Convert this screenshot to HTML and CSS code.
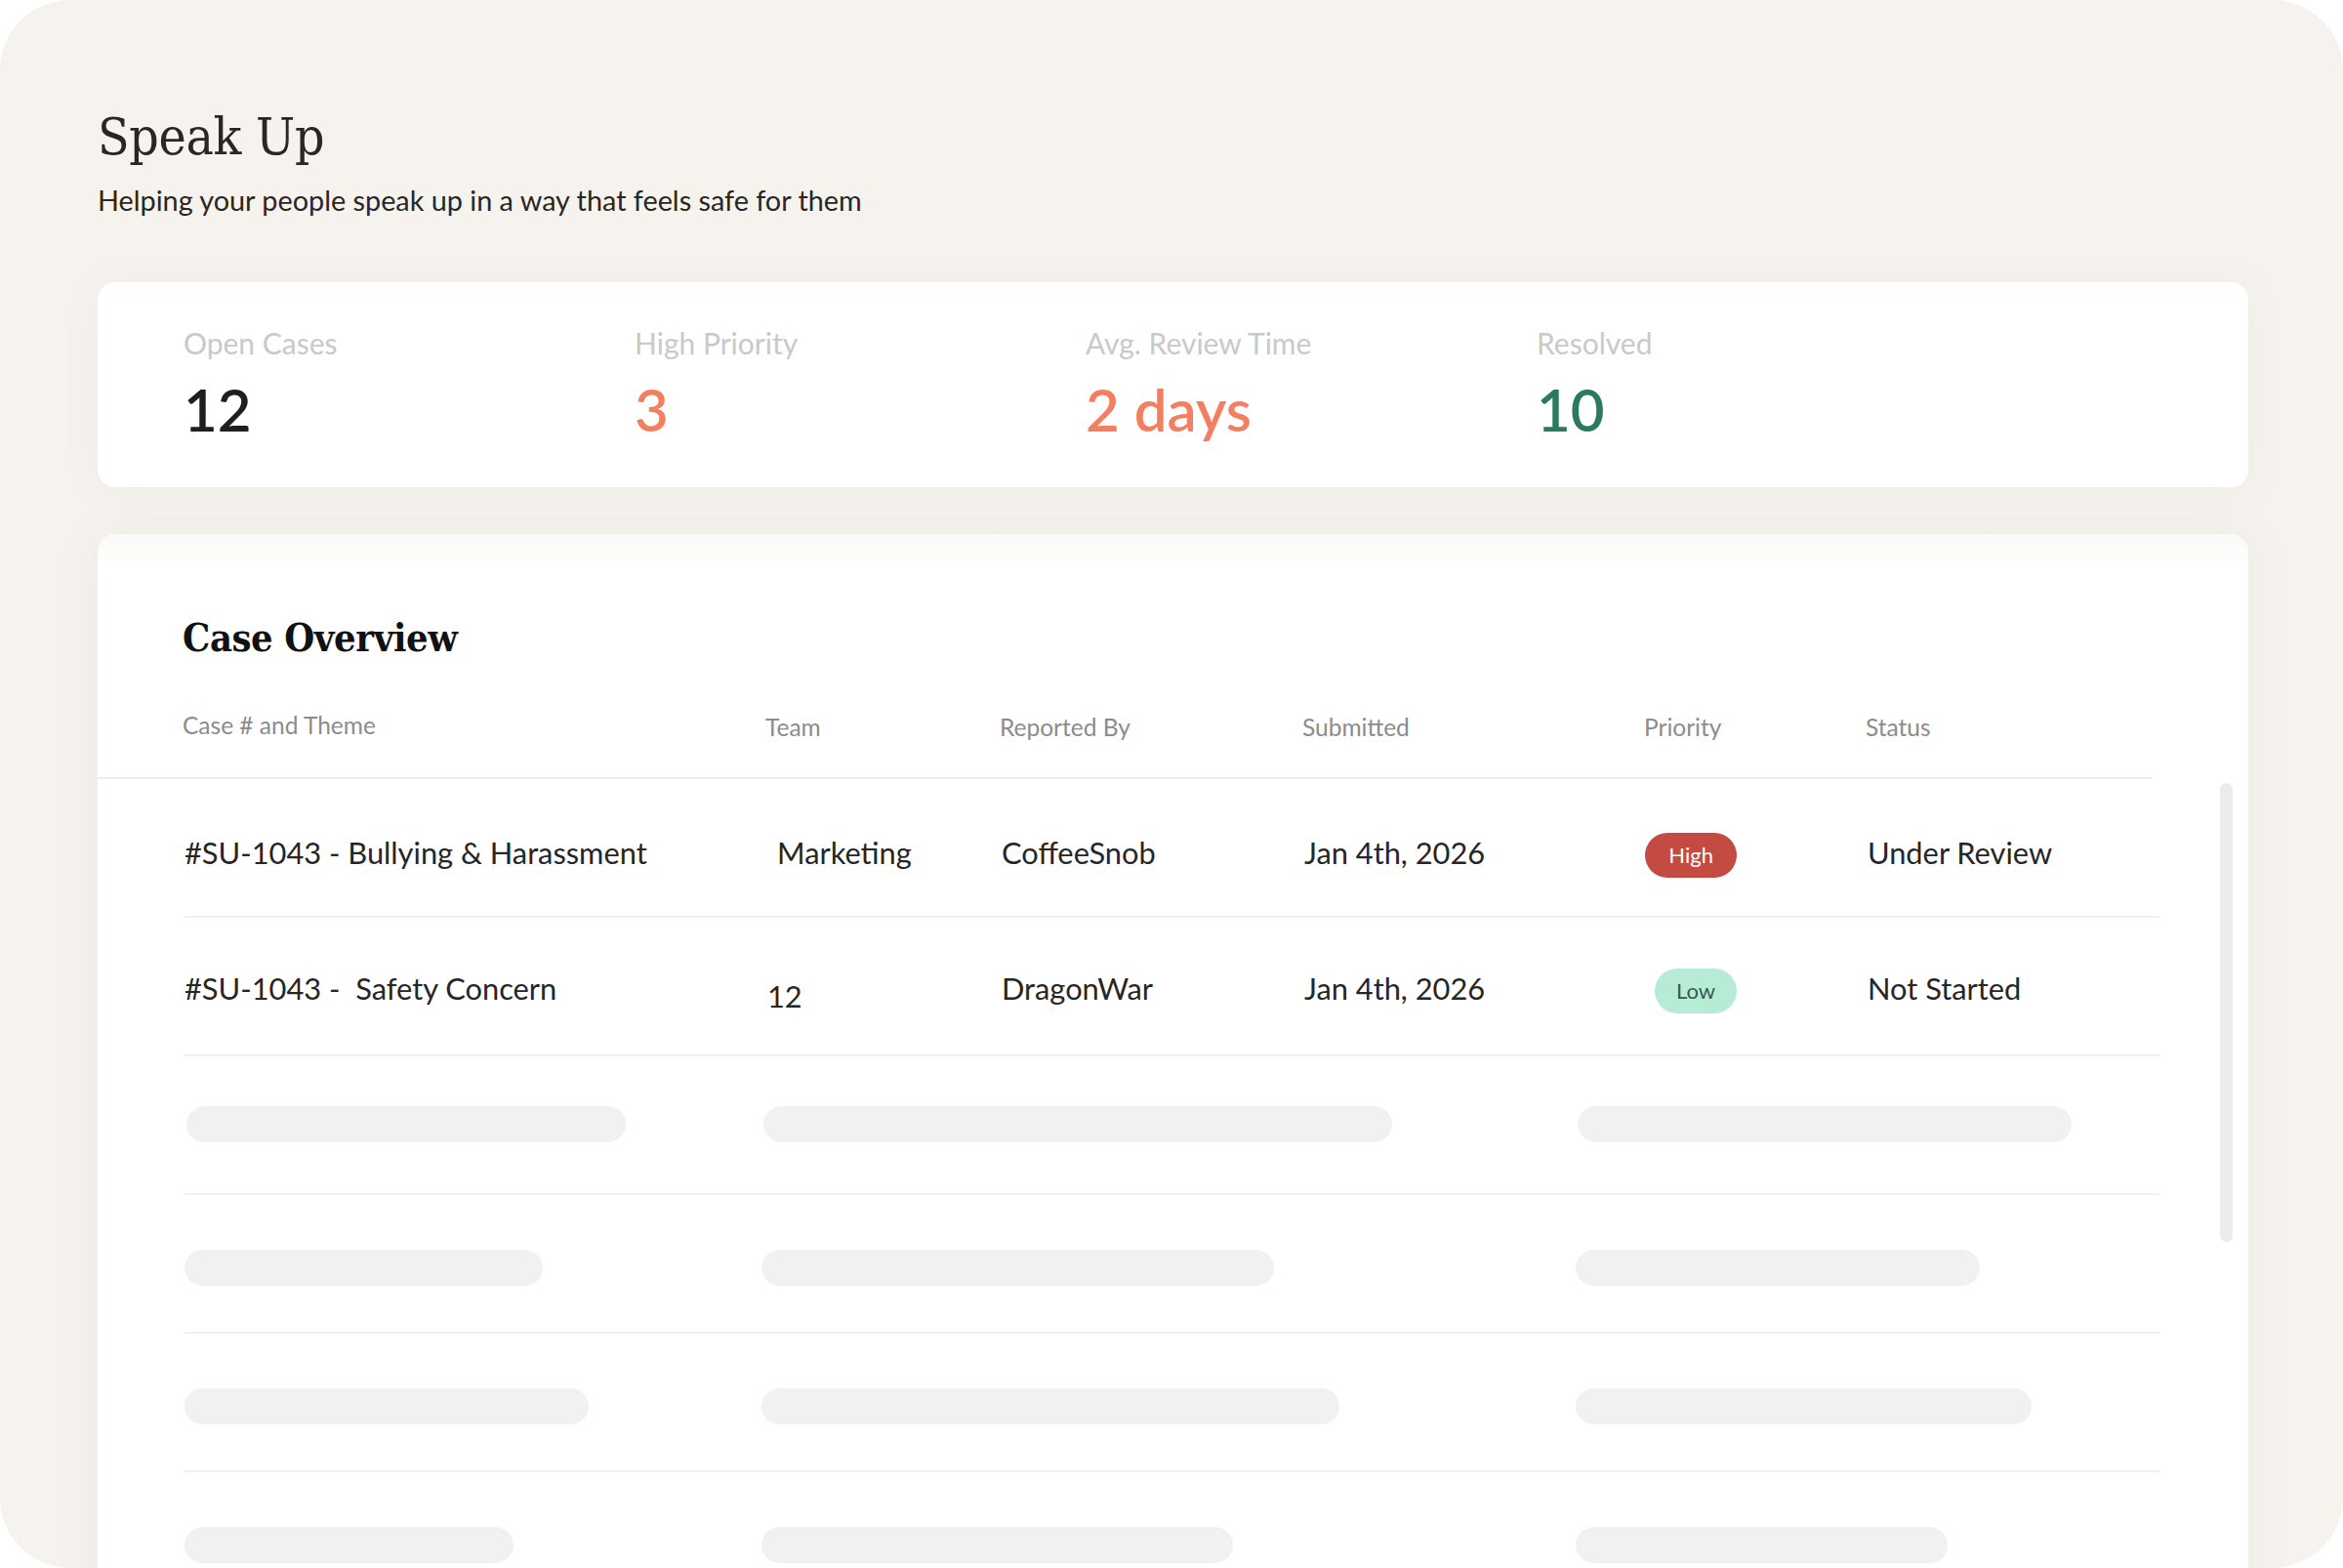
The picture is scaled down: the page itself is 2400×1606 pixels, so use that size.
FILE: index.html
```html
<!DOCTYPE html>
<html lang="en">
<head>
  <meta charset="UTF-8">
  <title>Speak Up</title>
  <link rel="stylesheet" href="styles.css">
</head>
<body>
  <div class="frame">
    <header class="page-head">
      <h1>Speak Up</h1>
      <p class="tagline">Helping your people speak up in a way that feels safe for them</p>
    </header>

    <section class="stats">
      <div class="stat">
        <div class="stat-label">Open Cases</div>
        <div class="stat-value">12</div>
      </div>
      <div class="stat">
        <div class="stat-label">High Priority</div>
        <div class="stat-value orange">3</div>
      </div>
      <div class="stat">
        <div class="stat-label">Avg. Review Time</div>
        <div class="stat-value orange">2 days</div>
      </div>
      <div class="stat">
        <div class="stat-label">Resolved</div>
        <div class="stat-value green">10</div>
      </div>
    </section>

    <section class="cases">
      <h2>Case Overview</h2>
      <div class="table-head">
        <div class="head-first">Case # and Theme</div>
        <div>Team</div>
        <div>Reported By</div>
        <div>Submitted</div>
        <div>Priority</div>
        <div>Status</div>
      </div>

      <div class="rows">
        <div class="row">
          <div>#SU-1043 - Bullying &amp; Harassment</div>
          <div class="team-indent">Marketing</div>
          <div>CoffeeSnob</div>
          <div>Jan 4th, 2026</div>
          <div class="prio"><span class="badge high">High</span></div>
          <div>Under Review</div>
        </div>
        <div class="row">
          <div>#SU-1043 -&nbsp; Safety Concern</div>
          <div class="team-low">12</div>
          <div>DragonWar</div>
          <div>Jan 4th, 2026</div>
          <div class="prio"><span class="badge low">Low</span></div>
          <div>Not Started</div>
        </div>

        <div class="skel-row first">
          <span class="bar w450"></span>
          <span class="bar w644"></span>
          <span class="bar w506"></span>
        </div>
        <div class="skel-row">
          <span class="bar w367"></span>
          <span class="bar w525"></span>
          <span class="bar w414"></span>
        </div>
        <div class="skel-row">
          <span class="bar w414"></span>
          <span class="bar w592"></span>
          <span class="bar w467"></span>
        </div>
        <div class="skel-row">
          <span class="bar w337"></span>
          <span class="bar w483"></span>
          <span class="bar w381"></span>
        </div>
      </div>

      <div class="scrollbar"></div>
    </section>
  </div>
</body>
</html>
```

FILE: styles.css
```css
* {
  margin: 0;
  padding: 0;
  box-sizing: border-box;
}

body {
  background: #ffffff;
  font-family: Lato, "Noto Sans", sans-serif;
  color: #262626;
}

.frame {
  width: 2400px;
  height: 1606px;
  border-radius: 72px;
  overflow: hidden;
  background: #f6f3ef;
  padding: 0 97px 0 100px;
}

.page-head {
  padding-top: 113px;
}

h1 {
  font-family: "DejaVu Serif", serif;
  font-stretch: condensed;
  font-weight: 400;
  font-size: 53px;
  line-height: 1;
  color: #2a2622;
  letter-spacing: -0.3px;
}

.tagline {
  margin-top: 22px;
  font-size: 28.8px;
  line-height: 1.2;
  color: #2a2622;
}

/* stat cards */
.stats {
  margin-top: 66px;
  background: #fff;
  border-radius: 18px;
  height: 210px;
  padding: 44px 0 0 88px;
  display: grid;
  grid-template-columns: repeat(4, 462px);
  box-shadow: 0 4px 40px rgba(120, 100, 80, 0.06);
}

.stat-label {
  font-size: 30px;
  line-height: 1.2;
  color: #c9c9c9;
}

.stat-value {
  margin-top: 14px;
  font-size: 60px;
  font-weight: 600;
  line-height: 1.2;
  color: #1f1f1f;
}

.stat-value.orange {
  color: #f47f60;
}

.stat-value.green {
  color: #2a7a62;
}

/* case table */
.cases {
  position: relative;
  margin-top: 48px;
  height: 1200px;
  background: linear-gradient(#fafaf8, #ffffff 40px);
  border-radius: 18px;
  padding-top: 87px;
  box-shadow: 0 4px 50px rgba(120, 100, 80, 0.07);
}

h2 {
  font-family: "DejaVu Serif", serif;
  font-stretch: condensed;
  font-weight: 700;
  font-size: 39.5px;
  line-height: 1;
  color: #111;
  padding-left: 87px;
  letter-spacing: -0.4px;
}

.table-head,
.row {
  display: grid;
  grid-template-columns: 597px 240px 310px 350px 227px 1fr;
}

.table-head {
  margin-top: 57px;
  width: 2104px;
  padding: 0 0 37px 87px;
  border-bottom: 2px solid #eeeeee;
  font-size: 24.5px;
  line-height: 1.2;
  color: #8c8c8c;
}

.table-head .head-first {
  margin-top: -2px;
}

.rows {
  margin-left: 89px;
  width: 2023px;
}

.row {
  height: 142px;
  padding-top: 58px;
  border-bottom: 2px solid #efefef;
  font-size: 30.8px;
  line-height: 1.2;
  color: #262626;
}

.row:nth-child(2) {
  padding-top: 55px;
}

.row .team-indent {
  padding-left: 10px;
}

.row .team-low {
  padding-top: 8px;
}

.prio {
  width: 93px;
  display: flex;
  justify-content: flex-end;
  margin-top: -3px;
}

.badge {
  height: 46px;
  border-radius: 23px;
  font-size: 22px;
  line-height: 46px;
  padding: 0 24px;
}

.badge.high {
  background: #c44b41;
  color: #fff;
}

.badge.low {
  background: #b6ecd6;
  color: #2e5d51;
  padding: 0 22px;
}

.skel-row {
  height: 142px;
  padding-top: 56px;
  border-bottom: 2px solid #efefef;
  display: grid;
  grid-template-columns: 591px 834px 1fr;
}

.skel-row.first {
  padding-top: 51px;
  padding-left: 2px;
}

.bar {
  display: block;
  height: 37px;
  border-radius: 19px;
  background: #f1f1f1;
}

.w337 { width: 337px; }
.w367 { width: 367px; }
.w381 { width: 381px; }
.w414 { width: 414px; }
.w450 { width: 450px; }
.w467 { width: 467px; }
.w483 { width: 483px; }
.w506 { width: 506px; }
.w525 { width: 525px; }
.w592 { width: 592px; }
.w644 { width: 644px; }

.scrollbar {
  position: absolute;
  top: 255px;
  right: 16px;
  width: 13px;
  height: 470px;
  border-radius: 7px;
  background: #ececec;
}
```
